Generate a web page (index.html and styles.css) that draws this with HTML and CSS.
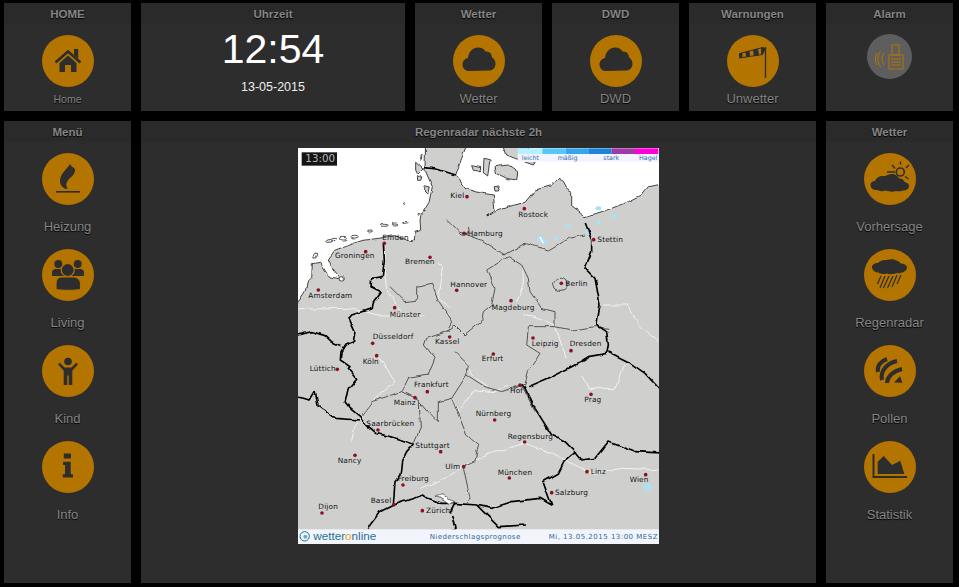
FILE: index.html
```html
<!DOCTYPE html>
<html lang="de">
<head>
    <meta charset="UTF-8">
    <meta name="viewport" content="width=device-width, initial-scale=1.0">
    <title>Regenradar</title>
    <link rel="stylesheet" href="styles.css">
</head>
<body>
    <div class="page">
        <!-- Top row -->
        <section class="panel">
            <h2 class="panel-title">HOME</h2>
            <div class="tile">
                <div class="circle">
                    <svg viewBox="0 0 52 52">
                        <path class="line" stroke-width="2.6" d="M13.5 27.5 26 16.5l12.5 11"/>
                        <path d="M32 14h4.2v9.5L32 20zM17.5 28 26 20.5l8.5 7.5v9H29v-7h-6v7h-5.500z"/>
                    </svg>
                </div>
                <span class="tile-label small">Home</span>
            </div>
        </section>

        <section class="panel wide">
            <h2 class="panel-title">Uhrzeit</h2>
            <div class="clock">
                <div class="clock-time">12:54</div>
                <div class="clock-date">13-05-2015</div>
            </div>
        </section>

        <section class="panel">
            <h2 class="panel-title">Wetter</h2>
            <div class="tile">
                <div class="circle">
                    <svg viewBox="0 0 52 52"><use href="#cloud"/></svg>
                </div>
                <span class="tile-label">Wetter</span>
            </div>
        </section>

        <section class="panel">
            <h2 class="panel-title">DWD</h2>
            <div class="tile">
                <div class="circle">
                    <svg viewBox="0 0 52 52"><use href="#cloud"/></svg>
                </div>
                <span class="tile-label">DWD</span>
            </div>
        </section>

        <section class="panel">
            <h2 class="panel-title">Warnungen</h2>
            <div class="tile">
                <div class="circle">
                    <svg viewBox="0 0 52 52">
                        <path class="line" stroke-width="1.3" d="M38.500 12V43"/>
                        <path class="line" stroke-width="1" d="M12.500 18.500 36.500 12.300 38 14.300 35.500 19.500 12.500 23z"/>
                        <path d="M12.500 18.500l3-.8v4.800l-3 .5zM18.500 17l4-1 .6 5.300-4 .6zM26 15l5-1.300 1 6.500-5.200.8zM34 13l2.500-.7 1.500 2-2.500 5.200-1.500.2z"/>
                    </svg>
                </div>
                <span class="tile-label">Unwetter</span>
            </div>
        </section>

        <section class="panel">
            <h2 class="panel-title">Alarm</h2>
            <div class="tile">
                <div class="circle alarm">
                    <svg viewBox="0 0 45 45">
                        <g class="alarm-line">
                            <rect x="25" y="11" width="7" height="10"/>
                            <rect x="22" y="21" width="14" height="14"/>
                            <path d="M24 25h10M24 28h10M24 31h10M17 19q-4 6 0 12M13.500 17q-5.500 8 0 16M10 19q-3.500 6 0 12"/>
                        </g>
                    </svg>
                </div>
            </div>
        </section>

        <!-- Main row -->
        <section class="panel">
            <h2 class="panel-title">Menü</h2>
            <div class="menu">
                <div class="menu-item">
                    <div class="circle">
                        <svg viewBox="0 0 52 52">
                            <path d="M28 11c-3 5-10 10-10 17 0 4.500 3.500 8 8 8-2-2.500-2.500-5-.5-8 2-3.500 8-6 7.500-11.500-.5-2-3.500-2-5-5.500z"/>
                            <path d="M14 38h24v1.600H14z"/>
                        </svg>
                    </div>
                    <span class="menu-label">Heizung</span>
                </div>
                <div class="menu-item">
                    <div class="circle">
                        <svg viewBox="0 0 52 52">
                            <circle cx="16.300" cy="15" r="4"/>
                            <circle cx="35.700" cy="15" r="4"/>
                            <path d="M10 27v-3.500c0-2 1.500-3.500 3.500-3.500h25c2 0 3.500 1.500 3.500 3.500V27z"/>
                            <circle class="ringed" cx="25.700" cy="21" r="6.500"/>
                            <path class="ringed" d="M14 40.500V34c0-3.500 2.500-6 6-6h12c3.500 0 6.500 2.500 6.500 6v6.500c-3 1-21.500 1-24.500 0z"/>
                        </svg>
                    </div>
                    <span class="menu-label">Living</span>
                </div>
                <div class="menu-item">
                    <div class="circle">
                        <svg viewBox="0 0 52 52">
                            <circle cx="26" cy="16.500" r="3.800"/>
                            <path d="M16 19.300l1.800-1.500 4.700 4.800h7l4.700-4.800 1.800 1.500-5.700 6.500V40h-3.600v-9.500h-1.400V40h-3.600V25.800z"/>
                        </svg>
                    </div>
                    <span class="menu-label">Kind</span>
                </div>
                <div class="menu-item">
                    <div class="circle">
                        <svg viewBox="0 0 52 52">
                            <path d="M21.800 12.500H29v5h-7.200zM21 20.700h7.700v12.500H31v3.300H20.700v-3.300H23V24h-2z"/>
                        </svg>
                    </div>
                    <span class="menu-label">Info</span>
                </div>
            </div>
        </section>

        <section class="panel center">
            <h2 class="panel-title">Regenradar nächste 2h</h2>
            <div class="map-wrap">
                <svg class="map" viewBox="9 9 1083 1188">
                    <defs>
                        <filter id="rough" filterUnits="userSpaceOnUse" x="-20" y="-20" width="1140" height="1240">
                            <feTurbulence type="fractalNoise" baseFrequency="0.03" numOctaves="2" seed="4" result="noise"/>
                            <feDisplacementMap in="SourceGraphic" in2="noise" scale="13" xChannelSelector="R" yChannelSelector="G"/>
                            <feGaussianBlur stdDeviation="1.3"/>
                        </filter>
                    </defs>
                    <rect class="sea" x="9" y="9" width="1083" height="1188"/>
                    <g class="map-shapes">
                        <!-- land and islands -->
                        <path class="land" d="M-20 478 9 472 30 440 38 410 50 398 52 356 74 352 88 375 102 396 136 402 112 372 100 345 122 316 175 296 210 285 262 278 300 272 345 288 358 285 360 262 380 255 378 225 382 205 402 172 412 125 390 75 392 -20 525 -20 500 40 482 90 510 130 560 145 595 150 600 195 575 210 640 185 690 172 720 135 770 122 795 100 812 130 830 140 830 185 850 200 870 215 905 205 950 190 1000 170 1040 150 1060 125 1120 112V1230H-20z"/>
                        <path class="land" d="M620 -20 635 30 660 40 715 60 725 45 700 30 700 -20zM600 65 640 60 668 80 665 105 635 100 605 85zM567 40 585 45 578 90 565 80zM530 62 558 68 553 78 535 76zM598 128 616 125 610 138 600 138zM378 30 384 30 382 46 378 44zM362 52 384 72 368 88 362 75zM367 95 383 92 380 106 368 106zM386 122 403 126 398 146 386 134z"/>
                        <g class="isles">
                            <ellipse cx="62" cy="332" rx="9" ry="4" transform="rotate(-60 62 332)"/>
                            <ellipse cx="108" cy="286" rx="16" ry="4" transform="rotate(-15 108 286)"/>
                            <ellipse cx="145" cy="281" rx="13" ry="4"/>
                            <ellipse cx="182" cy="275" rx="11" ry="4"/>
                            <ellipse cx="225" cy="258" rx="8" ry="3"/>
                            <ellipse cx="268" cy="241" rx="12" ry="3"/>
                            <ellipse cx="300" cy="237" rx="9" ry="3"/>
                            <ellipse cx="330" cy="232" rx="6" ry="3"/>
                            <ellipse cx="140" cy="400" rx="8" ry="5"/>
                            <ellipse cx="326" cy="176" rx="3" ry="3"/>
                            <ellipse cx="372" cy="208" rx="3" ry="3"/>
                        </g>
                        <!-- rivers -->
                        <g class="river">
                            <path d="M272 310 268 380 276 440 300 470 320 500"/>
                            <path d="M-20 490 70 492 160 490 250 510 390 510"/>
                            <path d="M420 345 440 365 440 400 430 460 470 490"/>
                            <path d="M684 370 685 420 665 470"/>
                            <path d="M685 505 780 540 800 600 815 640"/>
                            <path d="M240 620 300 710 230 770 180 840 170 890"/>
                            <path d="M375 1030 450 1000 500 965 600 920 690 895 770 925 850 965 900 985 980 970 1120 975"/>
                            <path d="M470 760 490 800 540 735 600 740 640 720"/>
                            <path d="M860 690 880 730 960 730 990 660"/>
                            <path d="M925 480 1000 480 1030 540 1090 590"/>
                            <path d="M515 650 530 690 580 725"/>
                        </g>
                        <!-- state borders -->
                        <g class="state">
                            <path d="M285 425 330 470 365 465 365 425 410 415 430 470 470 530 455 560 395 580 388 600 420 640 400 690 340 700 320 740"/>
                            <path d="M640 335 575 375 600 430 590 480 565 500 560 530 510 570 480 540 455 560"/>
                            <path d="M640 335 680 360 700 400 705 440 740 490 780 500 780 545 700 545 695 600 735 625 700 680 690 715"/>
                            <path d="M780 545 830 555 900 545 940 550"/>
                            <path d="M625 330 690 295 760 315 820 280 870 270"/>
                            <path d="M455 225 490 260 560 285 630 330"/>
                            <path d="M480 620 520 660 515 690 470 760 430 770 430 830 400 800 375 770 360 760 320 740 230 770 200 810"/>
                            <path d="M470 760 515 870 550 900 540 950 505 965 525 1060 520 1070"/>
                            <path d="M690 715 620 740 570 725 515 690"/>
                            <path d="M660 730 680 720 720 800"/>
                            <path d="M373 770 376 850 355 897"/>
                            <path d="M776 415a20 18 0 1 0 40 6 20 18 0 1 0-40-6zM490 262a14 14 0 1 0 30-16"/>
                        </g>
                        <!-- national borders -->
                        <g class="border">
                            <path d="M388 68 425 72 482 90"/>
                            <path d="M265 295 268 345 262 395 230 400 228 425 258 440 235 470 232 490 170 510 162 520 180 560 175 590 150 600 138 620 136 645 165 665 160 670 185 700 160 730 150 770 165 790 195 815 215 840 245 865 285 875 320 885 355 897"/>
                            <path d="M-20 578 50 560 90 572 110 590 138 602"/>
                            <path d="M-20 750 45 765 60 740 70 785 120 820 195 825"/>
                            <path d="M355 897 335 920 320 950 315 990 300 1010 295 1080 340 1065 385 1050 400 1060 440 1075 480 1075 545 1080 590 1090 650 1070 735 1060 770 1080 745 1010 790 985 810 945 840 920 810 890 770 870 720 790 690 730 680 715"/>
                            <path d="M700 725 760 700 830 665 880 635 935 625 940 600 935 560 905 540 915 480 900 400 870 370 890 320 890 285 870 235"/>
                            <path d="M840 920 860 945 900 940 940 890 1020 920 1120 925"/>
                            <path d="M940 620 1000 650 1050 685 1120 760"/>
                            <path d="M295 1080 255 1100 225 1140 215 1160"/>
                            <path d="M465 1105 480 1075M470 1110 480 1150 470 1160"/>
                            <path d="M545 1080 570 1105 610 1145 690 1140"/>
                        </g>
                        <path class="lake" d="M420 1050 445 1050 480 1075 462 1078z"/>
                    </g>
                    <!-- rain -->
                    <g class="rain">
                        <path d="M722 282 735 272 760 288 745 298z"/>
                        <ellipse cx="785" cy="280" rx="7" ry="5"/>
                        <ellipse cx="820" cy="240" rx="8" ry="5"/>
                        <ellipse cx="910" cy="190" rx="9" ry="6"/>
                        <ellipse cx="958" cy="212" rx="9" ry="5"/>
                        <ellipse cx="912" cy="232" rx="6" ry="6"/>
                        <ellipse cx="875" cy="262" rx="6" ry="6"/>
                        <path d="M1045 1025 1060 1012 1072 1025 1060 1038 1048 1036z"/>
                    </g>
                    <path class="rain-core" d="M735 276 745 295"/>
                    <!-- legend -->
                    <rect class="legend-back" x="668" y="27" width="424" height="24"/>
                    <rect class="leg1" x="668" y="10" width="74" height="17"/>
                    <rect class="leg2" x="742" y="10" width="70" height="17"/>
                    <rect class="leg3" x="812" y="10" width="70" height="17"/>
                    <rect class="leg4" x="882" y="10" width="68" height="17"/>
                    <rect class="leg5" x="950" y="10" width="70" height="17"/>
                    <rect class="leg6" x="1020" y="10" width="70" height="17"/>
                    <g class="legend-text">
                        <text x="680" y="46">leicht</text>
                        <text x="788" y="46">mäßig</text>
                        <text x="925" y="46">stark</text>
                        <text x="1032" y="46">Hagel</text>
                    </g>
                    <!-- cities -->
                    <g class="dots">
                        <circle cx="516" cy="155" r="5.500"/><circle cx="688" cy="191" r="5.500"/><circle cx="507" cy="265" r="5.500"/>
                        <circle cx="896" cy="284" r="5.500"/><circle cx="268" cy="295" r="5.500"/><circle cx="212" cy="320" r="5.500"/>
                        <circle cx="405" cy="337" r="5.500"/><circle cx="70" cy="435" r="5.500"/><circle cx="485" cy="436" r="5.500"/>
                        <circle cx="799" cy="415" r="5.500"/><circle cx="648" cy="467" r="5.500"/><circle cx="299" cy="488" r="5.500"/>
                        <circle cx="233" cy="595" r="5.500"/><circle cx="464" cy="576" r="5.500"/><circle cx="714" cy="579" r="5.500"/>
                        <circle cx="828" cy="617" r="5.500"/><circle cx="245" cy="632" r="5.500"/><circle cx="127" cy="673" r="5.500"/>
                        <circle cx="595" cy="627" r="5.500"/><circle cx="397" cy="740" r="5.500"/><circle cx="360" cy="758" r="5.500"/>
                        <circle cx="675" cy="720" r="5.500"/><circle cx="888" cy="748" r="5.500"/><circle cx="599" cy="825" r="5.500"/>
                        <circle cx="249" cy="855" r="5.500"/><circle cx="689" cy="891" r="5.500"/><circle cx="437" cy="920" r="5.500"/>
                        <circle cx="180" cy="931" r="5.500"/><circle cx="506" cy="965" r="5.500"/><circle cx="876" cy="980" r="5.500"/>
                        <circle cx="643" cy="999" r="5.500"/><circle cx="1052" cy="989" r="5.500"/><circle cx="324" cy="1020" r="5.500"/>
                        <circle cx="770" cy="1043" r="5.500"/><circle cx="296" cy="1079" r="5.500"/><circle cx="382" cy="1097" r="5.500"/>
                        <circle cx="81" cy="1104" r="5.500"/>
                    </g>
                    <g class="city">
                        <text x="466" y="160">Kiel</text><text x="670" y="215">Rostock</text><text x="518" y="272">Hamburg</text>
                        <text x="907" y="290">Stettin</text><text x="262" y="285">Emden</text><text x="120" y="340">Groningen</text>
                        <text x="330" y="358">Bremen</text><text x="40" y="458">Amsterdam</text><text x="466" y="425">Hannover</text>
                        <text x="811" y="423">Berlin</text><text x="590" y="494">Magdeburg</text><text x="284" y="515">Münster</text>
                        <text x="233" y="583">Düsseldorf</text><text x="420" y="597">Kassel</text><text x="710" y="603">Leipzig</text>
                        <text x="824" y="604">Dresden</text><text x="203" y="656">Köln</text><text x="44" y="679">Lüttich</text>
                        <text x="560" y="649">Erfurt</text><text x="357" y="727">Frankfurt</text><text x="296" y="780">Mainz</text>
                        <text x="645" y="743">Hof</text><text x="868" y="770">Prag</text><text x="542" y="814">Nürnberg</text>
                        <text x="214" y="843">Saarbrücken</text><text x="638" y="881">Regensburg</text><text x="361" y="909">Stuttgart</text>
                        <text x="128" y="953">Nancy</text><text x="451" y="972">Ulm</text><text x="887" y="988">Linz</text>
                        <text x="608" y="991">München</text><text x="1004" y="1010">Wien</text><text x="308" y="1009">Freiburg</text>
                        <text x="780" y="1049">Salzburg</text><text x="227" y="1073">Basel</text><text x="393" y="1103">Zürich</text>
                        <text x="70" y="1092">Dijon</text>
                    </g>
                    <!-- time stamp -->
                    <rect class="stamp" x="20" y="22" width="106" height="40"/>
                    <text class="stamp-text" x="31" y="52">13:00</text>
                    <!-- footer -->
                    <rect class="foot" x="9" y="1153" width="1083" height="44"/>
                    <circle class="logo-ring" cx="29" cy="1174" r="14"/>
                    <circle class="logo-dot" cx="31" cy="1175" r="6"/>
                    <text class="logo-text" x="55" y="1185">wetter<tspan class="logo-o">o</tspan>nline</text>
                    <text class="foot-text" x="404" y="1181">Niederschlagsprognose</text>
                    <text class="foot-text date" x="761" y="1181">Mi, 13.05.2015 13:00 MESZ</text>
                </svg>
            </div>
        </section>

        <section class="panel">
            <h2 class="panel-title">Wetter</h2>
            <div class="menu">
                <div class="menu-item">
                    <div class="circle">
                        <svg viewBox="0 0 52 52">
                            <path class="line" stroke-width="1.400" d="M23 19h8M28 12l3 3.500M36.500 8.500v3M45 12l-3 3M44.500 26l-3.500-2.500"/>
                            <circle class="line" stroke-width="1.600" cx="36.300" cy="19" r="4"/>
                            <path d="M6.500 32c0-2.500 2-4 4.500-4 1-3 4-5 7.500-5 2 0 3.500 0 5-1 3-1.500 7-1.500 9 .5 2.500 2 2 3 4 3 2 .5 4 2.500 4 3.500 2.500.5 4.500 2 4.500 4 0 3-3 4.500-6 4.500-2 1-5 1-7 .5-3 1-7 1-10-.5-3 1-7 1-9-.5-3 .5-6.500-1.500-6.500-5z"/>
                        </svg>
                    </div>
                    <span class="menu-label">Vorhersage</span>
                </div>
                <div class="menu-item">
                    <div class="circle">
                        <svg viewBox="0 0 52 52">
                            <path d="M8 18c0-2.500 3-4 6-4 1-2 5-3.500 9-3 3-1 7-1 9.500.5 2 .5 3.500 1.500 4 3 3 0 6.500 1.500 6.500 4s-3 5-5.500 5c-1.500 1-3 1-5 .5-3 1.500-7 1.500-10 .5-2 1-6 .5-8-1-3 0-6.500-2-6.500-5.500z"/>
                            <path class="line" stroke-width="1.200" d="M17 27l-3.500 8M21 27l-5 12M25 27l-5.500 12M29 27l-5.500 12M33 26l-5 12M37 26l-4 9"/>
                        </svg>
                    </div>
                    <span class="menu-label">Regenradar</span>
                </div>
                <div class="menu-item">
                    <div class="circle">
                        <svg viewBox="0 0 52 52">
                            <g class="line" stroke-width="4">
                                <path d="M14 27c-1.500-6 3-11 9-13"/>
                                <path d="M18 35c-2-9 5-17 15-19"/>
                                <path d="M23 38c0-6 6-12 15-14"/>
                            </g>
                            <path d="M30 37.500l8.500.300-2.500-6.500z"/>
                        </svg>
                    </div>
                    <span class="menu-label">Pollen</span>
                </div>
                <div class="menu-item">
                    <div class="circle">
                        <svg viewBox="0 0 52 52">
                            <path d="M8.500 13h2v22H43v2H8.500z"/>
                            <path d="M13.700 33V20.700L19.700 15l8.300 9 8.300-4.300 4 13.300z"/>
                        </svg>
                    </div>
                    <span class="menu-label">Statistik</span>
                </div>
            </div>
        </section>
    </div>

    <!-- shared icon -->
    <svg class="defs" width="0" height="0">
        <defs>
            <path id="cloud" d="M15.500 36C12 36 9.500 33 9.500 29.500c0-3.300 2.500-6 5.500-6.500 .5-6 5-10.500 10-10.500 3.500 0 6 1.500 7.500 4 4-.5 6.500 2.500 6.500 6 2 1 3.500 3.500 3.500 6.500 0 3.800-3 6.500-6.500 6.500z"/>
        </defs>
    </svg>
</body>
</html>
```

FILE: styles.css
```css
/* Basic layout */
html, body {
    margin: 0;
    padding: 0;
    height: 100%;
    overflow: hidden;
    background: #000;
}

body {
    font-family: "Liberation Sans", Arial, sans-serif;
}

.page {
    display: grid;
    grid-template-columns: repeat(7, 127px);
    grid-template-rows: 108px 462px;
    column-gap: 10px;
    row-gap: 10px;
    padding: 3px 0 0 4px;
}

.panel {
    display: flex;
    flex-direction: column;
    background: #2d2d2d;
}

.wide {
    grid-column: span 2;
}

.center {
    grid-column: span 5;
}

.panel-title {
    margin: 0;
    height: 21px;
    line-height: 22px;
    font-size: 11.5px;
    font-weight: bold;
    text-align: center;
    color: #858585;
    background: #2a2a2a;
    text-shadow: 0 1px 1px #000;
}

/* Icon circles */
.circle {
    width: 52px;
    height: 52px;
    border-radius: 50%;
    background: #b37400;
    flex-shrink: 0;
}

.circle svg {
    display: block;
    width: 100%;
    height: 100%;
    fill: #2d2d2d;
}

.line {
    fill: none;
    stroke: #2d2d2d;
}

.ringed {
    stroke: #b37400;
    stroke-width: 1.2;
}

.alarm {
    width: 45px;
    height: 45px;
    margin-top: -1px;
    background: #5e5e5e;
}

.alarm-line {
    fill: none;
    stroke: #b37400;
    stroke-width: 1;
}

.tile {
    display: flex;
    flex-direction: column;
    align-items: center;
    padding-top: 11px;
}

.tile-label {
    line-height: 24px;
    font-size: 13px;
    color: #858585;
    text-shadow: 0 1px 1px #000;
}

.tile-label.small {
    font-size: 10.5px;
}

/* Clock */
.clock {
    text-align: center;
    color: #fff;
}

.clock-time {
    height: 54px;
    line-height: 50px;
    font-size: 41px;
}

.clock-date {
    line-height: 18px;
    font-size: 12.5px;
    color: #eee;
}

/* Side menus */
.menu {
    display: flex;
    flex-direction: column;
    align-items: center;
    padding-top: 11px;
}

.menu-item {
    display: flex;
    flex-direction: column;
    align-items: center;
    height: 96px;
}

.menu-label {
    line-height: 43px;
    font-size: 13px;
    color: #858585;
    text-shadow: 0 1px 1px #000;
}

/* Radar map */
.map-wrap {
    display: flex;
    justify-content: center;
    padding-top: 6px;
}

.map {
    display: block;
    width: 361px;
    height: 396px;
}

.map-shapes {
    filter: url(#rough);
}

.sea { fill: #fff; }
.land { fill: #cfd0ce; stroke: #222; stroke-width: 2.500; stroke-linejoin: round; }
.isles { fill: #fff; stroke: #333; stroke-width: 2.500; }
.river { fill: none; stroke: #f2f3f2; stroke-width: 3; }
.state { fill: none; stroke: #3a3a3a; stroke-width: 2.500; }
.border { fill: none; stroke: #000; stroke-width: 5; stroke-linejoin: round; }
.lake { fill: #fff; stroke: #222; stroke-width: 2; }
.rain { fill: #a8e2f8; }
.rain-core { stroke: #fff; stroke-width: 4; }

.legend-back { fill: #f3f4fd; }
.leg1 { fill: #b6f0ff; }
.leg2 { fill: #55c8f8; }
.leg3 { fill: #35a6ec; }
.leg4 { fill: #1f84d6; }
.leg5 { fill: #a13aa6; }
.leg6 { fill: #ff00dc; }

.legend-text {
    font-family: "DejaVu Sans", sans-serif;
    font-size: 19px;
    fill: #2b6fb0;
}

.dots { fill: #8c1020; }

.city {
    font-family: "DejaVu Sans", sans-serif;
    font-size: 22px;
    letter-spacing: 0.5px;
    fill: #111;
}

.stamp { fill: #151515; }

.stamp-text {
    font-family: "DejaVu Sans", sans-serif;
    font-size: 31px;
    fill: #b8b8b8;
}

.foot { fill: #f2f5fc; }
.logo-ring { fill: none; stroke: #1e6f94; stroke-width: 3; }
.logo-dot { fill: #6fa9c4; }

.logo-text {
    font-family: "Liberation Sans", Arial, sans-serif;
    font-size: 35px;
    fill: #1e6f94;
}

.logo-o { fill: #e8a020; }

.foot-text {
    font-family: "DejaVu Sans", sans-serif;
    font-size: 21px;
    letter-spacing: 1.3px;
    fill: #2c6aa0;
}

.foot-text.date {
    letter-spacing: 1.5px;
}

.defs {
    position: absolute;
}
```
